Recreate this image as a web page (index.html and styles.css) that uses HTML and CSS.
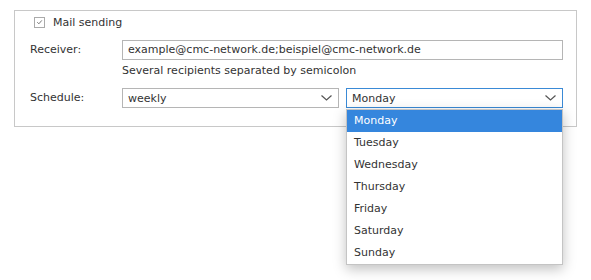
FILE: index.html
```html
<!DOCTYPE html>
<html lang="en">
<head>
  <meta charset="UTF-8">
  <title>Mail sending</title>
  <link rel="stylesheet" href="styles.css">
</head>
<body>
  <div class="panel">
    <div class="check-row">
      <span class="check">
        <svg width="10" height="10" viewBox="0 0 10 10"><path d="M2.5 5.2 L4.3 7 L7.6 3.2" fill="none" stroke="#6b6b6b" stroke-width="1"/></svg>
      </span>
      <span>Mail sending</span>
    </div>

    <div class="row">
      <div class="label">Receiver:</div>
      <div class="field">
        <div class="input">example@cmc-network.de;beispiel@cmc-network.de</div>
        <div class="hint">Several recipients separated by semicolon</div>
      </div>
    </div>

    <div class="row schedule">
      <div class="label">Schedule:</div>
      <div class="selects">
        <div class="select">
          <span>weekly</span>
          <svg class="chev" width="11" height="6" viewBox="0 0 11 6"><path d="M0.5 0.5 L5.5 5 L10.5 0.5" fill="none" stroke="#555" stroke-width="1.2"/></svg>
        </div>
        <div class="select open">
          <span>Monday</span>
          <svg class="chev" width="11" height="6" viewBox="0 0 11 6"><path d="M0.5 0.5 L5.5 5 L10.5 0.5" fill="none" stroke="#555" stroke-width="1.2"/></svg>
          <ul class="menu">
            <li class="active">Monday</li>
            <li>Tuesday</li>
            <li>Wednesday</li>
            <li>Thursday</li>
            <li>Friday</li>
            <li>Saturday</li>
            <li>Sunday</li>
          </ul>
        </div>
      </div>
    </div>
  </div>
</body>
</html>
```

FILE: styles.css
```css
* {margin:0; padding:0; box-sizing:border-box;}
html, body {min-height:100%; height:100%;}
body {
  background:#fff; color:#333;
  font-family:"DejaVu Sans", Verdana, sans-serif; font-size:11px;
  padding:10px 14px;
}
.panel {
  width:563px; height:117px;
  border:1px solid #c8c8c8;
  padding:4px 13px 0 15px;
}
.check-row {
  display:flex; align-items:center; gap:8px;
  height:14px; margin-left:4px;
}
.check {
  width:11px; height:11px; border:1px solid #aaa; background:#fff;
  display:flex; align-items:center; justify-content:center;
}
.row {display:flex; margin-top:11px;}
.schedule {margin-top:10px;}
.label {width:92px; line-height:20px;}
.field {flex:1;}
.input {
  height:20px; border:1px solid #b5b5b5; line-height:18px; padding:0 5px;
}
.hint {margin-top:4px; line-height:14px;}
.selects {flex:1; display:flex; gap:7px;}
.select {
  flex:1; position:relative;
  height:20px; border:1px solid #b5b5b5; padding:0 5px;
  display:flex; align-items:center; justify-content:space-between;
}
.select .chev {margin-right:1px;}
.select.open {border-color:#3a8ad6;}
.menu {
  position:absolute; top:20px; left:-1px; right:-1px;
  list-style:none; background:#fff;
  border:1px solid #c4c4c4;
  box-shadow:0 4px 12px rgba(0,0,0,0.25);
}
.menu li {height:22px; line-height:22px; padding:0 7px;}
.menu li.active {background:#3586dd; color:#fff;}
```
